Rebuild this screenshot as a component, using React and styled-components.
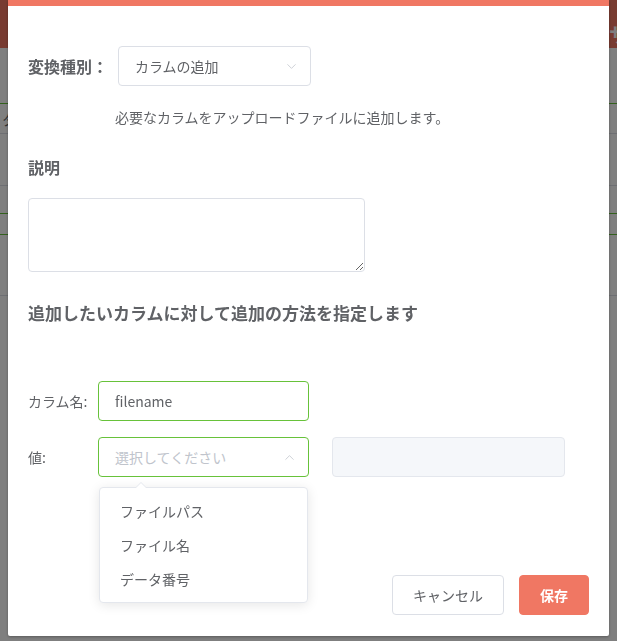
import styled, { createGlobalStyle } from 'styled-components'
import { ChevronDown, ChevronUp } from 'lucide-react'

const GlobalStyle = createGlobalStyle`
  html, body {
    margin: 0;
    padding: 0;
    background: #fff;
    font-family: "Noto Sans CJK JP", "Noto Sans", sans-serif;
    color: #606266;
  }
  * { box-sizing: border-box; }
`;

const Page = styled.div`
  position: relative;
  z-index: 0;
  width: 100%;
  min-height: 641px;
  background: #fff;
`;

const PageHeader = styled.div`
  height: 48px;
  background: #f07763;
  display: flex;
  align-items: center;
  justify-content: flex-end;
  padding-top: 20px;
  color: #fff;
  font-size: 20px;
  font-weight: 700;
  overflow: hidden;
  white-space: nowrap;
`;

const HeaderTitle = styled.span`
  margin-right: -12px;
`;

const PageRows = styled.div`
  display: flex;
  flex-direction: column;
  padding-top: 55px;
`;

const PageRow = styled.div`
  height: ${p => p.$h}px;
  border-top: 1px solid ${p => (p.$green ? '#67c23a' : '#dcdfe6')};
  font-size: 14px;
  padding-left: 2px;
  display: flex;
  align-items: center;
`;

const Overlay = styled.div`
  position: fixed;
  inset: 0;
  z-index: 10;
  background: rgba(0, 0, 0, 0.5);
  padding-left: 8px;
  overflow: hidden;
`;

const Modal = styled.div`
  width: 601px;
  background: #fff;
  border-top: 6px solid #f07763;
  border-radius: 0 0 2px 2px;
  box-shadow: 0 1px 3px rgba(0, 0, 0, 0.3);
  padding: 40px 19px 21px 20px;
`;

const TypeRow = styled.div`
  display: flex;
  align-items: center;
  height: 40px;
`;

const StrongLabel = styled.div`
  width: 90px;
  font-size: 16px;
  font-weight: 700;
  color: #606266;
  white-space: nowrap;
`;

const SelectBox = styled.div`
  position: relative;
  width: ${p => p.$w}px;
  height: 40px;
  border: 1px solid ${p => (p.$focus ? '#67c23a' : '#dcdfe6')};
  border-radius: 4px;
  display: flex;
  align-items: center;
  justify-content: space-between;
  padding: 0 11px 0 16px;
  font-size: 14px;
  color: ${p => (p.$placeholder ? '#c0c4cc' : '#606266')};
  background: #fff;

  svg {
    color: #c0c4cc;
  }
`;

const Hint = styled.div`
  margin: 21px 0 0 87px;
  font-size: 14px;
  line-height: 20px;
  color: #606266;
`;

const SectionTitle = styled.div`
  margin-top: ${p => p.$mt}px;
  font-size: ${p => p.$size}px;
  line-height: 24px;
  font-weight: 700;
  color: #606266;
`;

const TextArea = styled.textarea`
  display: block;
  margin-top: 19px;
  width: 337px;
  height: 74px;
  border: 1px solid #dcdfe6;
  border-radius: 4px;
  font-family: inherit;
  font-size: 14px;
  color: #606266;
  padding: 5px 15px;
  outline: none;
  resize: vertical;
`;

const Fields = styled.div`
  margin-top: 56px;
  display: flex;
  flex-direction: column;
  gap: 16px;
`;

const FieldRow = styled.div`
  display: flex;
  align-items: center;
  gap: 23px;
  height: 40px;
`;

const FieldLabel = styled.div`
  width: 70px;
  margin-right: -23px;
  font-size: 14px;
  color: #606266;
  white-space: nowrap;
`;

const TextInput = styled.div`
  width: 211px;
  height: 40px;
  border: 1px solid #67c23a;
  border-radius: 4px;
  display: flex;
  align-items: center;
  padding-left: 16px;
  font-size: 14px;
  color: #606266;
`;

const DisabledInput = styled.div`
  width: 233px;
  height: 40px;
  background: #f5f7fa;
  border: 1px solid #e4e7ed;
  border-radius: 4px;
`;

const Dropdown = styled.div`
  position: absolute;
  top: 49px;
  left: 0;
  width: 209px;
  background: #fff;
  border: 1px solid #e4e7ed;
  border-radius: 4px;
  box-shadow: 0 2px 12px rgba(0, 0, 0, 0.1);
  padding: 6px 0;
  z-index: 2;

  &::before {
    content: '';
    position: absolute;
    top: -6px;
    left: 35px;
    border-left: 6px solid transparent;
    border-right: 6px solid transparent;
    border-bottom: 6px solid #e4e7ed;
  }
  &::after {
    content: '';
    position: absolute;
    top: -5px;
    left: 36px;
    border-left: 5px solid transparent;
    border-right: 5px solid transparent;
    border-bottom: 5px solid #fff;
  }
`;

const Option = styled.div`
  height: 34px;
  line-height: 34px;
  padding-left: 20px;
  font-size: 14px;
  color: #606266;
`;

const Footer = styled.div`
  margin-top: 98px;
  display: flex;
  justify-content: flex-end;
  gap: 15px;
  padding-right: 1px;
`;

const Button = styled.button`
  height: 40px;
  min-width: ${p => p.$w}px;
  border-radius: 4px;
  font-family: inherit;
  font-size: 14px;
  border: 1px solid ${p => (p.$primary ? '#f07763' : '#dcdfe6')};
  background: ${p => (p.$primary ? '#f07763' : '#fff')};
  color: ${p => (p.$primary ? '#fff' : '#606266')};
  font-weight: ${p => (p.$primary ? 700 : 400)};
  padding: 0 20px;
`;

const options = ['ファイルパス', 'ファイル名', 'データ番号'];

export default function App() {
  return (
    <>
      <GlobalStyle />
      <Page>
        <PageHeader>
          <HeaderTitle>サ</HeaderTitle>
        </PageHeader>
        <PageRows>
          <PageRow $h={30} $green>タ</PageRow>
          <PageRow $h={52} />
          <PageRow $h={28} />
          <PageRow $h={21} $green />
          <PageRow $h={61} $green />
          <PageRow $h={40} />
        </PageRows>
      </Page>
      <Overlay>
        <Modal>
          <TypeRow>
            <StrongLabel>変換種別：</StrongLabel>
            <SelectBox $w={193}>
              <span>カラムの追加</span>
              <ChevronDown size={15} strokeWidth={1.25} />
            </SelectBox>
          </TypeRow>
          <Hint>必要なカラムをアップロードファイルに追加します。</Hint>

          <SectionTitle $mt={28} $size={16}>説明</SectionTitle>
          <TextArea />

          <SectionTitle $mt={29} $size={17}>追加したいカラムに対して追加の方法を指定します</SectionTitle>

          <Fields>
            <FieldRow>
              <FieldLabel>カラム名:</FieldLabel>
              <TextInput>filename</TextInput>
            </FieldRow>
            <FieldRow>
              <FieldLabel>値:</FieldLabel>
              <SelectBox $w={211} $focus $placeholder>
                <span>選択してください</span>
                <ChevronUp size={15} strokeWidth={1.25} />
                <Dropdown>
                  {options.map(o => (
                    <Option key={o}>{o}</Option>
                  ))}
                </Dropdown>
              </SelectBox>
              <DisabledInput />
            </FieldRow>
          </Fields>

          <Footer>
            <Button $w={111}>キャンセル</Button>
            <Button $w={70} $primary>保存</Button>
          </Footer>
        </Modal>
      </Overlay>
    </>
  );
}
